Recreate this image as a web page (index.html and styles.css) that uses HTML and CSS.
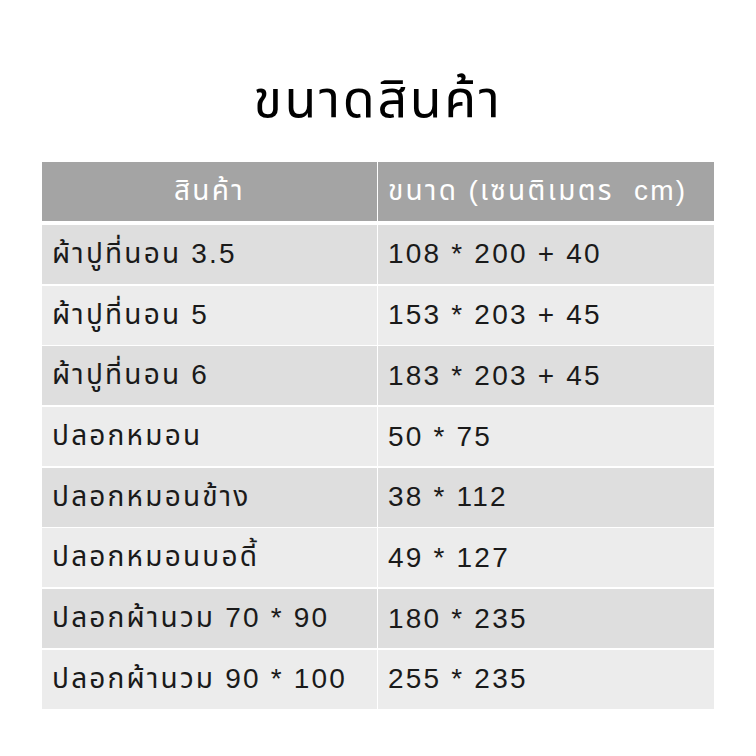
FILE: index.html
```html
<!DOCTYPE html>
<html lang="th">
<head>
<meta charset="utf-8">
<link rel="stylesheet" href="styles.css">
</head>
<body>
<div class="page">
  <h1 class="title">ขนาดสินค้า</h1>
  <div class="table">
    <div class="row head">
      <div class="cell c1">สินค้า</div>
      <div class="cell c2">ขนาด (เซนติเมตร&nbsp; cm)</div>
    </div>
    <div class="row odd"><div class="cell">ผ้าปูที่นอน 3.5</div><div class="cell">108 * 200 + 40</div></div>
    <div class="row even"><div class="cell">ผ้าปูที่นอน 5</div><div class="cell">153 * 203 + 45</div></div>
    <div class="row odd"><div class="cell">ผ้าปูที่นอน 6</div><div class="cell">183 * 203 + 45</div></div>
    <div class="row even"><div class="cell">ปลอกหมอน</div><div class="cell">50 * 75</div></div>
    <div class="row odd"><div class="cell">ปลอกหมอนข้าง</div><div class="cell">38 * 112</div></div>
    <div class="row even"><div class="cell">ปลอกหมอนบอดี้</div><div class="cell">49 * 127</div></div>
    <div class="row odd"><div class="cell">ปลอกผ้านวม 70 * 90</div><div class="cell">180 * 235</div></div>
    <div class="row even"><div class="cell">ปลอกผ้านวม 90 * 100</div><div class="cell">255 * 235</div></div>
  </div>
</div>
</body>
</html>
```
FILE: styles.css
```css
html, body {
  margin: 0;
  padding: 0;
  background: #ffffff;
}
.page {
  width: 756px;
  height: 756px;
  box-sizing: border-box;
  padding: 64px 42px 0 42px;
  font-family: "Liberation Sans", "Noto Sans Thai", sans-serif;
  color: #1a1a1a;
}
.title {
  margin: 0;
  height: 98px;
  text-align: center;
  font-size: 52px;
  font-weight: 400;
  line-height: 70px;
  letter-spacing: 2.6px;
  color: #000;
}
.table {
  display: flex;
  flex-direction: column;
  gap: 1.7px;
}
.row {
  display: grid;
  grid-template-columns: 335px 336px;
  column-gap: 1px;
  height: 59px;
  background: #ffffff;
}
.row.head {
  margin-bottom: 2.3px;
}
.cell {
  display: flex;
  align-items: center;
  padding-left: 10px;
  font-size: 28px;
  letter-spacing: 2.2px;
  white-space: nowrap;
}
.row.odd .cell { background: #dedede; }
.row.even .cell { background: #ececec; }
.row.head .cell {
  background: #a4a4a4;
  color: #ffffff;
  font-size: 28px;
  letter-spacing: 2.3px;
}
.row.head .c1 { justify-content: center; padding-left: 0; }
.row.head .c2 { padding-left: 10px; }
```
